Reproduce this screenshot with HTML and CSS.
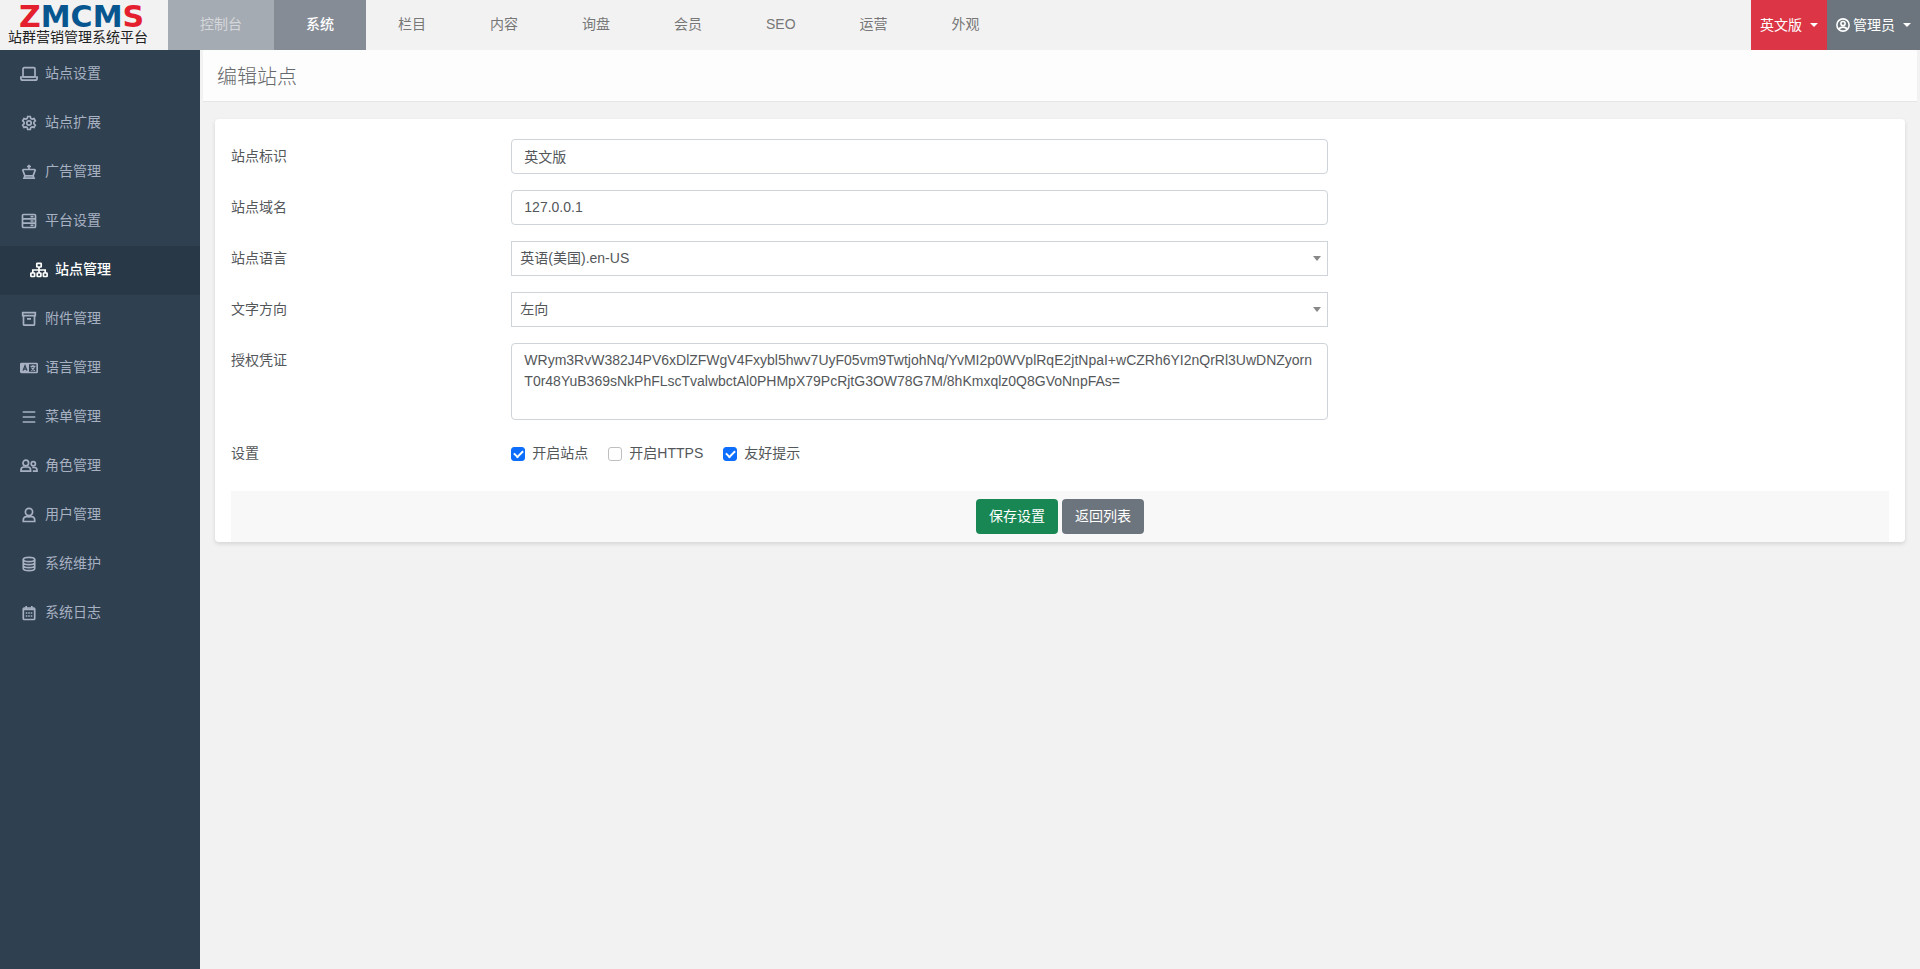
FILE: index.html
```html
<!DOCTYPE html>
<html lang="zh-CN">
<head>
<meta charset="utf-8">
<title>编辑站点</title>
<link rel="stylesheet" href="styles.css">
</head>
<body>
<header class="topbar">
  <a class="brand" href="#">
    <span class="brand-name"><span class="red">Z</span><span class="blue">MCM</span><span class="red">S</span></span>
    <span class="brand-sub">站群营销管理系统平台</span>
  </a>
  <nav class="topnav">
    <a class="topnav-link console" href="#">控制台</a>
    <a class="topnav-link current" href="#">系统</a>
    <a class="topnav-link" href="#">栏目</a>
    <a class="topnav-link" href="#">内容</a>
    <a class="topnav-link" href="#">询盘</a>
    <a class="topnav-link" href="#">会员</a>
    <a class="topnav-link" href="#">SEO</a>
    <a class="topnav-link" href="#">运营</a>
    <a class="topnav-link" href="#">外观</a>
  </nav>
  <button class="top-btn danger" type="button">英文版<span class="caret"></span></button>
  <button class="top-btn secondary" type="button">
    <svg class="user-icon" viewBox="0 0 16 16"><circle cx="8" cy="8" r="7"/><circle cx="8" cy="6.3" r="2.4"/><path d="M3.6 13c.5-2 1.900-2.600 4.400-2.600s3.900.600 4.400 2.600"/></svg>管理员<span class="caret"></span>
  </button>
</header>
<div class="layout">
  <aside class="sidebar">
    <nav class="menu">
      <a class="menu-item" href="#"><svg class="icon" viewBox="0 0 18 16"><rect x="3" y="1.700" width="12" height="9.300" rx="1.200"/><path d="M.9 11h16.200v1.200a2 2 0 0 1-2 2H2.900a2 2 0 0 1-2-2z"/></svg>站点设置</a>
      <a class="menu-item" href="#"><svg class="icon" viewBox="0 0 18 16"><path d="M7.700 1.500h2.600l.5 1.900 1.300.75 1.900-.55 1.300 2.250-1.400 1.400v1.500l1.400 1.400L14 12.400l-1.900-.55-1.300.75-.5 1.900H7.700l-.5-1.900-1.300-.75-1.900.55-1.300-2.250 1.400-1.400v-1.500L2.700 5.850 4 3.600l1.900.55 1.300-.75z"/><circle cx="9" cy="8" r="2.200"/></svg>站点扩展</a>
      <a class="menu-item" href="#"><svg class="icon" viewBox="0 0 18 16"><path d="M9 .8v4.700M7 2.500h4M3.500 5.500h11c.5 0 .8.500.6 1l-2 5.300H4.900l-2-5.300c-.2-.5.100-1 .6-1zM4.900 11.800l-.9 2.400h10l-.9-2.400"/></svg>广告管理</a>
      <a class="menu-item" href="#"><svg class="icon" viewBox="0 0 18 16"><rect x="2.500" y="1.500" width="13" height="13" rx="1"/><path d="M2.500 5.800h13M2.500 10.200h13M10.500 3.700h3M10.500 8h3M10.500 12.300h3"/></svg>平台设置</a>
      <a class="menu-item active" href="#"><svg class="icon" viewBox="0 0 18 16"><rect x="6.800" y="1.300" width="4.400" height="3.700" rx=".5"/><path d="M9 5v6M2.800 11V8h12.400v3"/><rect x=".9" y="11" width="3.700" height="3.500" rx=".5"/><rect x="7.200" y="11" width="3.700" height="3.500" rx=".5"/><rect x="13.400" y="11" width="3.700" height="3.500" rx=".5"/></svg>站点管理</a>
      <a class="menu-item" href="#"><svg class="icon" viewBox="0 0 18 16"><path d="M2.700 1.700h12.600v3H2.700zM3.500 4.700h11v8.500a1 1 0 0 1-1 1h-9a1 1 0 0 1-1-1zM7 7.800h4"/></svg>附件管理</a>
      <a class="menu-item" href="#"><svg class="icon" viewBox="0 0 18 16"><rect x=".8" y="3.500" width="16.400" height="9" rx=".8"/><path class="solid" d="M1 3.500h8v9H1z"/><path class="cut" d="M3 10.600 5 5.600l2 5M3.700 9.100h2.600"/><path class="fine" d="M10.500 6.300h5M13 5v1.300M11.300 10.600c2-1 3-2.500 3.200-4.200M11.500 7.500c.7 1.500 2 2.600 3.500 3.200"/></svg>语言管理</a>
      <a class="menu-item" href="#"><svg class="icon" viewBox="0 0 18 16"><path d="M2.700 3h12.600M2.700 8h12.600M2.700 13h12.600"/></svg>菜单管理</a>
      <a class="menu-item" href="#"><svg class="icon" viewBox="0 0 18 16"><circle cx="5.800" cy="5" r="2.800"/><path d="M1 13.200v-1c0-2 1.200-3.200 2.900-3.200h3.800c1.700 0 2.900 1.200 2.900 3.200v1z"/><circle cx="13.300" cy="5.700" r="2.100"/><path d="M12.800 13.200H17v-1c0-1.700-.9-2.700-2.300-2.700h-2.500"/></svg>角色管理</a>
      <a class="menu-item" href="#"><svg class="icon" viewBox="0 0 18 16"><circle cx="9" cy="5" r="3.600"/><path d="M3.300 14.500v-1.200c0-2.200 1.400-3.700 3.400-3.700.8.400 3.800.4 4.600 0 2 0 3.400 1.500 3.400 3.700v1.200z"/></svg>用户管理</a>
      <a class="menu-item" href="#"><svg class="icon" viewBox="0 0 18 16"><ellipse cx="9" cy="3.500" rx="5.700" ry="2.200"/><path d="M3.300 3.500v9c0 1.300 2.500 2.200 5.700 2.200s5.700-.9 5.700-2.200v-9M3.300 6.500c0 1.300 2.500 2.200 5.700 2.200s5.700-.9 5.700-2.200M3.300 9.500c0 1.300 2.500 2.200 5.700 2.200s5.700-.9 5.700-2.200"/></svg>系统维护</a>
      <a class="menu-item" href="#"><svg class="icon" viewBox="0 0 18 16"><rect x="3.300" y="3" width="11.400" height="11.500" rx="1"/><path d="M3.300 4.300h11.400M6.200 1v3M11.800 1v3M5.700 8h1.600M8.200 8h1.600M10.700 8h1.600M5.700 11h1.600M8.200 11h1.600M10.700 11h1.600"/></svg>系统日志</a>
    </nav>
  </aside>
  <main class="content">
    <h1 class="page-title">编辑站点</h1>
    <form class="card">
      <div class="row">
        <label class="row-label" for="site-name">站点标识</label>
        <div class="row-field"><input class="control" id="site-name" type="text" value="英文版"></div>
      </div>
      <div class="row">
        <label class="row-label" for="site-domain">站点域名</label>
        <div class="row-field"><input class="control" id="site-domain" type="text" value="127.0.0.1"></div>
      </div>
      <div class="row">
        <label class="row-label" for="site-lang">站点语言</label>
        <div class="row-field select-box"><select class="control select" id="site-lang"><option>英语(美国).en-US</option></select></div>
      </div>
      <div class="row">
        <label class="row-label" for="site-dir">文字方向</label>
        <div class="row-field select-box"><select class="control select" id="site-dir"><option>左向</option><option>右向</option></select></div>
      </div>
      <div class="row">
        <label class="row-label" for="site-key">授权凭证</label>
        <div class="row-field"><textarea class="control area" id="site-key" spellcheck="false">WRym3RvW382J4PV6xDlZFWgV4Fxybl5hwv7UyF05vm9TwtjohNq/YvMI2p0WVplRqE2jtNpaI+wCZRh6YI2nQrRl3UwDNZyornT0r48YuB369sNkPhFLscTvalwbctAl0PHMpX79PcRjtG3OW78G7M/8hKmxqlz0Q8GVoNnpFAs=</textarea></div>
      </div>
      <div class="row">
        <span class="row-label">设置</span>
        <div class="row-field checks">
          <label class="check"><input class="tick" type="checkbox" checked>开启站点</label>
          <label class="check"><input class="tick" type="checkbox">开启HTTPS</label>
          <label class="check"><input class="tick" type="checkbox" checked>友好提示</label>
        </div>
      </div>
      <div class="actions">
        <button class="btn success" type="submit">保存设置</button>
        <button class="btn secondary" type="button">返回列表</button>
      </div>
    </form>
  </main>
</div>
</body>
</html>
```
FILE: styles.css
```css
* {
  box-sizing: border-box;
}

body {
  margin: 0;
  min-height: 100vh;
  display: flex;
  flex-direction: column;
  background: #f2f2f2;
  color: #54575a;
  font: 14px/21px "Liberation Sans", "Noto Sans CJK SC", sans-serif;
}

a {
  color: inherit;
  text-decoration: none;
}

button,
input,
select,
textarea {
  font: inherit;
  color: inherit;
}

/* Top bar */
.topbar {
  display: flex;
  height: 50px;
  background: #f2f2f2;
}

.brand {
  width: 168px;
  padding: 5px 0 0 8px;
}

.brand-name,
.brand-sub {
  display: block;
}

.brand-name {
  padding-left: 11px;
  font: bold 30px/24px "DejaVu Sans", sans-serif;
}

.red {
  color: #e4202e;
}

.blue {
  color: #07568f;
}

.brand-sub {
  color: #222;
  line-height: 16px;
}

.topnav {
  display: flex;
  flex: 1;
}

.topnav-link {
  padding: 0 32px;
  line-height: 49px;
  color: #777;
}

.topnav-link.console {
  background: #a5abb3;
  color: #d5d7da;
}

.topnav-link.current {
  background: #868c96;
  color: #fff;
  font-weight: 500;
}

.top-btn {
  display: flex;
  align-items: center;
  padding: 0 9px;
  border: 0;
  color: #fff;
}

.danger {
  background: #dc3545;
}

.secondary {
  background: #6c757d;
}

.success {
  background: #198754;
}

.caret {
  margin-left: 8px;
  border: 4px solid transparent;
  border-top-color: #fff;
  border-bottom: 0;
}

.user-icon {
  width: 14px;
  height: 14px;
  margin-right: 3px;
  fill: none;
  stroke: #fff;
  stroke-width: 1.8;
}

/* Sidebar */
.layout {
  display: flex;
  flex: 1;
}

.sidebar {
  width: 200px;
  background: #2f4050;
}

.menu-item {
  display: flex;
  align-items: center;
  gap: 7px;
  height: 49px;
  padding: 0 0 2px 20px;
  color: #a7b1c2;
}

.menu-item.active {
  padding-left: 30px;
  background: #293846;
  color: #fff;
  font-weight: 500;
}

.icon {
  width: 18px;
  height: 16px;
  fill: none;
  stroke: currentColor;
  stroke-width: 1.7;
}

.icon .solid {
  fill: currentColor;
  stroke: none;
}

.icon .cut {
  stroke: #2f4050;
  stroke-width: 1.2;
}

.icon .fine {
  stroke-width: 1.2;
}

/* Content */
.content {
  flex: 1;
}

.page-title {
  margin: 0 3px;
  padding: 12px 14px 9px;
  border-bottom: 1px solid #e4e6e9;
  background: #fdfdfd;
  color: #676a6c;
  font-size: 20px;
  font-weight: 300;
  line-height: 30px;
}

.card {
  margin: 17px 15px 0;
  padding: 20px 16px 0;
  border-radius: 4px;
  background: #fff;
  box-shadow: 0 2px 4px rgba(0, 0, 0, 0.12);
}

.row {
  display: flex;
  margin: 0 -12px 16px;
}

.row-label {
  width: 16.6667%;
  padding: 7px 12px;
}

.row-field {
  width: 50%;
  padding: 0 12px;
}

.control {
  display: block;
  width: 100%;
  height: 35px;
  margin: 0;
  padding: 5px 12px 7px;
  border: 1px solid #ced4da;
  border-radius: 4px;
  background: #fff;
  outline: 0;
}

.select-box {
  position: relative;
}

.select-box::after {
  content: "";
  position: absolute;
  top: 15px;
  right: 19px;
  border: 4px solid transparent;
  border-top: 5px solid #888;
  border-bottom: 0;
  pointer-events: none;
}

.select {
  appearance: none;
  padding: 0 8px;
  border-radius: 0;
}

.area {
  height: 77px;
  padding: 6px 12px;
  resize: none;
  word-break: break-all;
  overflow: hidden;
}

.checks {
  display: flex;
  align-items: center;
  gap: 20px;
}

.check {
  display: flex;
  align-items: center;
  gap: 7px;
}

.tick {
  appearance: none;
  display: grid;
  place-items: center;
  width: 14px;
  height: 14px;
  margin: 0;
  border: 1px solid #bfbfbf;
  border-radius: 3px;
  background: #fff;
}

.tick:checked {
  border-color: #0d6efd;
  background: #0d6efd;
}

.tick:checked::before {
  content: "";
  width: 7px;
  height: 4px;
  margin-bottom: 2px;
  border: solid #fff;
  border-width: 0 0 2px 2px;
  transform: rotate(-45deg);
}

.actions {
  display: flex;
  justify-content: center;
  gap: 4px;
  margin-top: 20px;
  padding: 8px;
  background: #f8f8f8;
}

.btn {
  height: 35px;
  padding: 0 13px;
  border: 0;
  border-radius: 4px;
  color: #fff;
}
```
